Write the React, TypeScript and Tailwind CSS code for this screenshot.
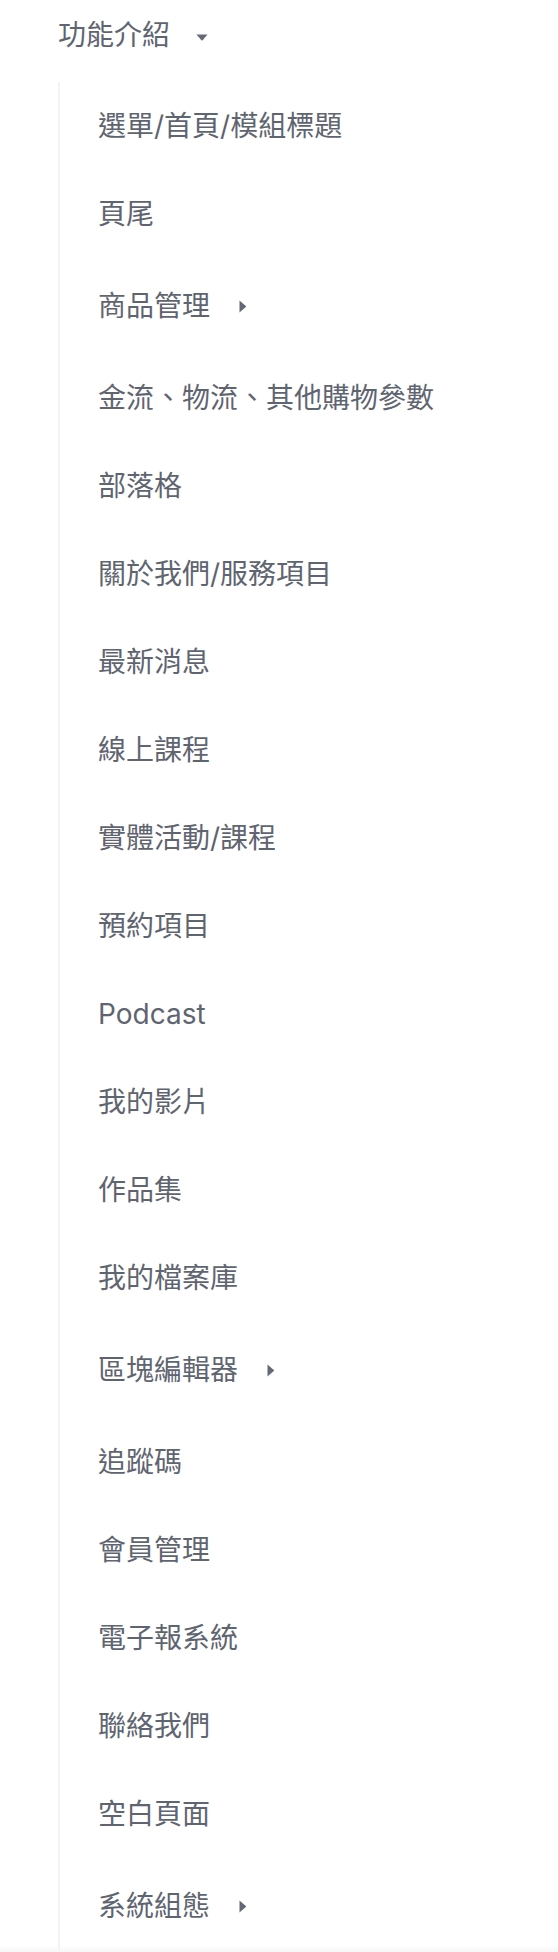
import React from "react";

const items: { label: string; arrow?: boolean }[] = [
  { label: "選單/首頁/模組標題" },
  { label: "頁尾" },
  { label: "商品管理", arrow: true },
  { label: "金流、物流、其他購物參數" },
  { label: "部落格" },
  { label: "關於我們/服務項目" },
  { label: "最新消息" },
  { label: "線上課程" },
  { label: "實體活動/課程" },
  { label: "預約項目" },
  { label: "Podcast" },
  { label: "我的影片" },
  { label: "作品集" },
  { label: "我的檔案庫" },
  { label: "區塊編輯器", arrow: true },
  { label: "追蹤碼" },
  { label: "會員管理" },
  { label: "電子報系統" },
  { label: "聯絡我們" },
  { label: "空白頁面" },
  { label: "系統組態", arrow: true },
];

function CaretDown() {
  return (
    <svg width="12" height="7" viewBox="0 0 12 7" className="ml-[26px] mt-[4px]">
      <path d="M0.5 0.5 H11.5 L6.6 6.2 Q6 6.8 5.4 6.2 Z" fill="#646a75" />
    </svg>
  );
}

function CaretRight() {
  return (
    <svg width="8" height="13" viewBox="0 0 8 13" className="ml-[29px]">
      <path d="M0.5 0.5 V12.5 L6.8 7.1 Q7.4 6.5 6.8 5.9 Z" fill="#646a75" />
    </svg>
  );
}

export default function App() {
  return (
    <div
      className="relative w-[558px] h-[1952px] overflow-hidden bg-white text-[#5f6570] text-[28px] leading-none"
      style={{ fontFamily: '"Inter", "Noto Sans CJK TC", sans-serif' }}
    >
      <div className="flex items-center h-[70px] pl-[58px]">
        <span>功能介紹</span>
        <CaretDown />
      </div>
      <div className="ml-[58px] mt-[23px] border-l-2 border-[#f3f3f4]">
        <div className="-mt-[11px]">
          {items.map((it) => (
            <div
              key={it.label}
              className={`flex items-center pl-[38px] ${it.arrow ? "h-[96px]" : "h-[88px]"}`}
            >
              <span>{it.label}</span>
              {it.arrow && <CaretRight />}
            </div>
          ))}
        </div>
      </div>
      <div className="absolute left-0 right-0 bottom-0 h-[7px] bg-gradient-to-b from-transparent to-[#f6f6f6]" />
    </div>
  );
}
